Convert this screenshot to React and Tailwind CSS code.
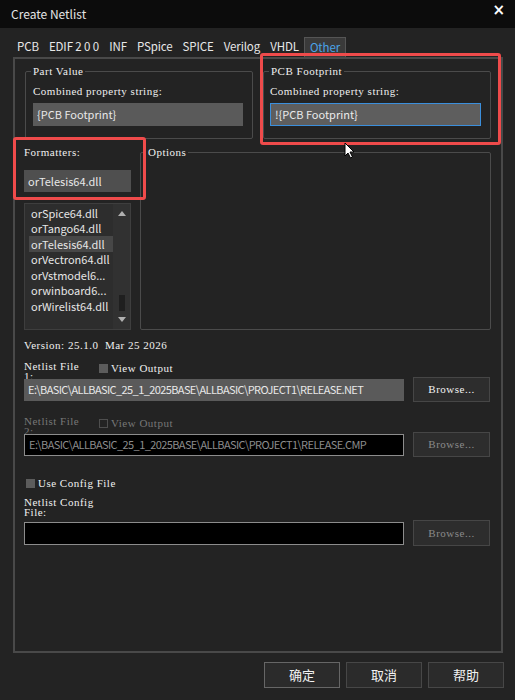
const MONO = "font-['Liberation_Serif',serif] text-[11px] tracking-[0.5px]";
const SANS = "font-['Noto_Sans_CJK_SC','Noto_Sans',sans-serif]";

const TABS = ['PCB', 'EDIF 2 0 0', 'INF', 'PSpice', 'SPICE', 'Verilog', 'VHDL', 'Other'];
const FORMATTERS = [
    'orSpice64.dll',
    'orTango64.dll',
    'orTelesis64.dll',
    'orVectron64.dll',
    'orVstmodel6...',
    'orwinboard6...',
    'orWirelist64.dll',
];

function GroupBox({ label, className = '', children }) {
    return (
        <div className={`relative border border-[#4b4b4b] rounded-[2px] ${className}`}>
            <span className={`absolute -top-[7px] left-[5px] bg-[#232323] px-[2px] leading-[12px] whitespace-nowrap text-[#f0f0f0] ${MONO}`}>
                {label}
            </span>
            {children}
        </div>
    );
}

function Check({ filled, disabled, children }) {
    return (
        <div className="flex items-center gap-[3px]">
            <span className={`w-[9px] h-[9px] ${filled ? 'bg-[#5c5c5c]' : 'border border-[#4e4e4e]'}`} />
            <span className={`leading-[12px] whitespace-nowrap ${MONO} ${disabled ? 'text-[#777777]' : 'text-[#f0f0f0]'}`}>{children}</span>
        </div>
    );
}

function Browse({ disabled }) {
    return (
        <div className={`ml-[9px] w-[77px] h-full flex items-center justify-center bg-[#2d2d2d] border border-[#464646] ${MONO} ${disabled ? 'text-[#8a8a8a]' : 'text-[#f2f2f2]'}`}>
            Browse...
        </div>
    );
}

function PathField({ value, disabled, h = 'h-[22px]' }) {
    return (
        <div className={`w-[380px] ${h} flex items-center pl-[4px] text-[11px] tracking-[-0.6px] whitespace-nowrap overflow-hidden ${SANS} ${disabled ? 'bg-black border border-[#8c8c8c] text-[#8c8c8c]' : 'bg-[#5a5a5a] text-[#e8e8e8]'}`}>
            {value}
        </div>
    );
}

// label that wraps onto a second line tucked under the field below it
function FileLabel({ children, disabled }) {
    return (
        <div className="w-[75px] h-[18px] overflow-hidden">
            <div className={`w-[62px] leading-[10px] ${MONO} ${disabled ? 'text-[#777777]' : 'text-[#f0f0f0]'}`}>
                {children}
            </div>
        </div>
    );
}

function FormatterList() {
    return (
        <div className="mt-[11px] h-[127px] bg-[#2d2d2d] border border-[#3e3e3e] flex">
            <div className="flex-1 pt-[1px] pl-[4px]">
                {FORMATTERS.map((name) => (
                    <div key={name}
                        className={`h-[15.5px] pl-[2px] flex items-center text-[11px] text-[#e6e6e6] ${SANS} ${name === 'orTelesis64.dll' ? 'bg-[#474747]' : ''}`}>
                        {name}
                    </div>
                ))}
            </div>
            {/* scrollbar */}
            <div className="w-[17px] flex flex-col items-center justify-between py-[7px] bg-[#313131]">
                <svg width="8" height="5" viewBox="0 0 8 5"><path d="M0 5 L4 0 L8 5 Z" fill="#b0b0b0" /></svg>
                <div className="flex-1 w-full flex flex-col justify-end items-center pb-[6px]">
                    <div className="w-[6px] h-[16px] bg-[#1f1f1f]" />
                </div>
                <svg width="8" height="5" viewBox="0 0 8 5"><path d="M0 0 L8 0 L4 5 Z" fill="#b0b0b0" /></svg>
            </div>
        </div>
    );
}

export default function App() {
    return (
        <div className="relative w-[515px] h-[700px] bg-[#232323] overflow-hidden flex flex-col">
            {/* title bar */}
            <div className="h-[28px] bg-[#0c0c0c] flex justify-between pl-[11px] pr-[10px]">
                <span className={`self-center text-[12px] text-[#e4e4e4] ${SANS}`}>Create Netlist</span>
                <span className="mt-[1px] text-[15px] leading-[18px] font-bold text-white font-['DejaVu_Sans',sans-serif]">×</span>
            </div>

            {/* tabs */}
            <div className="h-[29px] flex items-end pl-[12px]">
                {TABS.map((t) => (
                    <div key={t}
                        className={`h-[20px] px-[5px] flex items-center text-[11.5px] tracking-[-0.1px] ${SANS} ${t === 'Other' ? 'bg-[#3a3a3a] border border-b-0 border-[#555555] text-[#4aa3e8]' : 'text-[#e8e8e8]'}`}>
                        {t}
                    </div>
                ))}
            </div>

            {/* tab page */}
            <div className="ml-[13px] w-[490px] h-[596px] border-2 border-[#494949] bg-[#232323] flex flex-col">
                <div className="mt-[12px] ml-[10px] flex gap-[10px]">
                    <GroupBox label="Part Value" className="w-[228px] h-[68px] pl-[7px] pt-[13px]">
                        <div className={`leading-[12px] text-[#f0f0f0] ${MONO}`}>Combined property string:</div>
                        <div className={`mt-[6px] w-[210px] h-[23px] bg-[#5a5a5a] flex items-center pl-[4px] text-[11px] text-[#e8e8e8] ${SANS}`}>
                            {'{PCB Footprint}'}
                        </div>
                    </GroupBox>
                    <GroupBox label="PCB Footprint" className="w-[228px] h-[68px] pl-[6px] pt-[13px]">
                        <div className={`leading-[12px] text-[#f0f0f0] ${MONO}`}>Combined property string:</div>
                        <div className={`mt-[6px] w-[211px] h-[23px] bg-[#5e5e5e] border border-[#3b8fdc] flex items-center pl-[4px] text-[11px] text-[#eaeaea] ${SANS}`}>
                            {'!{PCB Footprint}'}
                        </div>
                    </GroupBox>
                </div>

                <div className="mt-[7px] ml-[9px] flex items-start">
                    <div className="w-[107px]">
                        <div className={`h-[12px] leading-[12px] text-[#f0f0f0] ${MONO}`}>Formatters:</div>
                        <div className={`mt-[12px] h-[22px] bg-[#4f4f4f] flex items-center pl-[4px] text-[11px] text-[#e8e8e8] ${SANS}`}>
                            orTelesis64.dll
                        </div>
                        <FormatterList />
                    </div>
                    <GroupBox label="Options" className="ml-[9px] mt-[6px] w-[351px] h-[178px]" />
                </div>

                <div className={`mt-[9px] ml-[9px] h-[12px] leading-[12px] whitespace-pre text-[#f0f0f0] ${MONO}`}>
                    {'Version: 25.1.0  Mar 25 2026'}
                </div>

                {/* netlist file 1 */}
                <div className="mt-[10px] ml-[9px] flex items-start">
                    <FileLabel>Netlist File 1:</FileLabel>
                    <div className="mt-[1px]"><Check filled>View Output</Check></div>
                </div>
                <div className="-mt-[2px] ml-[9px] h-[25px] flex items-center">
                    <PathField value="E:\BASIC\ALLBASIC_25_1_2025BASE\ALLBASIC\PROJECT1\RELEASE.NET" />
                    <Browse />
                </div>

                {/* netlist file 2 */}
                <div className="mt-[14px] ml-[9px] flex items-start">
                    <FileLabel disabled>Netlist File 2:</FileLabel>
                    <div className="mt-[1px]"><Check disabled>View Output</Check></div>
                </div>
                <div className="-mt-[2px] ml-[9px] h-[25px] flex items-center">
                    <PathField disabled value="E:\BASIC\ALLBASIC_25_1_2025BASE\ALLBASIC\PROJECT1\RELEASE.CMP" />
                    <Browse disabled />
                </div>

                {/* config file */}
                <div className="mt-[20px] ml-[11px] h-[12px] flex items-center">
                    <Check filled>Use Config File</Check>
                </div>
                <div className={`mt-[8px] ml-[9px] w-[70px] h-[20px] leading-[10px] text-[#f0f0f0] ${MONO}`}>Netlist Config File:</div>
                <div className="mt-[3px] ml-[9px] h-[26px] flex items-center">
                    <PathField disabled value="" h="h-[23px]" />
                    <Browse disabled />
                </div>
            </div>

            {/* dialog buttons */}
            <div className="mt-[9px] pr-[11px] flex justify-end gap-[6px]">
                {['确定', '取消', '帮助'].map((b, i) => (
                    <div key={b}
                        className={`w-[76px] h-[26px] flex items-center justify-center bg-[#2b2b2b] border text-[13px] text-[#f2f2f2] ${SANS} ${i === 0 ? 'border-[#666666]' : 'border-[#474747]'}`}>
                        {b}
                    </div>
                ))}
            </div>

            {/* highlight frames */}
            <div className="absolute left-[260px] top-[53px] w-[241px] h-[92px] border-[3px] border-[#ef4b4b] rounded-[3px]" />
            <div className="absolute left-[13px] top-[137px] w-[133px] h-[63px] border-[3px] border-[#ef4b4b] rounded-[3px]" />

            {/* mouse pointer */}
            <svg className="absolute left-[344px] top-[142px]" width="11" height="17" viewBox="0 0 11 17">
                <path d="M1 1 L1 14 L4 11 L6.5 16 L8.5 15 L6 10 L10 10 Z" fill="#ffffff" stroke="#000000" strokeWidth="1" strokeLinejoin="round" />
            </svg>
        </div>
    );
}
